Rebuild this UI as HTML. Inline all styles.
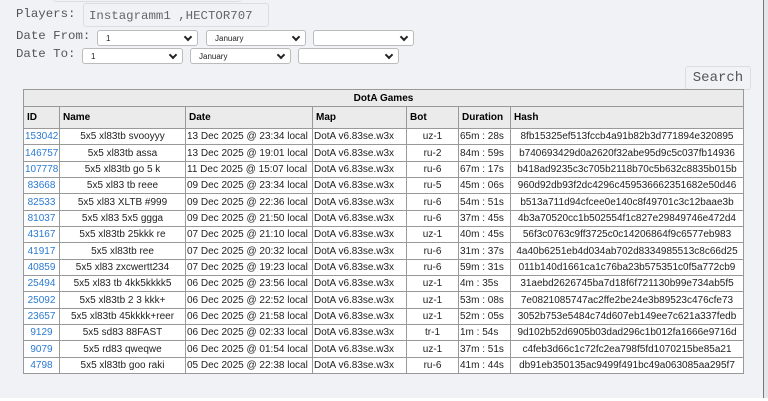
<!DOCTYPE html>
<html><head><meta charset="utf-8"><style>
body{margin:0;width:768px;height:401px;background:#f1f2f6;position:relative;overflow:hidden;font-family:"Liberation Sans",Arial,sans-serif;}
.mono{font-family:"Liberation Mono","DejaVu Sans Mono",monospace;color:#555;}
.lbl{position:absolute;font-size:12.4px;}
.box{position:absolute;background:#f1f2f6;border:1px solid #ddd;border-radius:3px;}
.sel{position:absolute;height:16px;background:#fff;border:1px solid #bbb;border-radius:3px;font-size:8px;line-height:15px;padding-left:8px;box-sizing:border-box;color:#222;}
.sel::after{content:"";position:absolute;right:6px;top:3px;width:4px;height:4px;border-right:2px solid #222;border-bottom:2px solid #222;transform:rotate(45deg);}
table{position:absolute;left:23px;top:89px;width:721px;table-layout:fixed;border-collapse:collapse;background:#fff;font-size:10px;}
td,th{border:1px solid #999;padding:0 1px;white-space:nowrap;overflow:hidden;}
tr{height:16.35px;}
tr.h{height:22px;}
tr.t{height:17px;}
th{background:#ebebeb;font-weight:bold;text-align:left;padding:0 3px;}
th.t{text-align:center;}
td{text-align:center;color:#222;}
td.l{text-align:left;}
td a{color:#2a7ad3;}
</style></head><body>
<div class="box" style="left:53px;top:-8px;width:186px;height:8px"></div>
<div class="lbl mono" style="left:16px;top:7px">Players:</div>
<div class="box mono" style="left:83px;top:3px;width:186px;height:24px;font-size:12.4px;line-height:24px;padding-left:5px;box-sizing:border-box;color:#666">Instagramm1 ,HECTOR707</div>
<div class="lbl mono" style="left:16px;top:29px">Date From:</div>
<div class="sel" style="left:97px;top:30px;width:101px">1</div>
<div class="sel" style="left:206px;top:30px;width:100px">January</div>
<div class="sel" style="left:313px;top:30px;width:101px;"></div>
<div class="lbl mono" style="left:16px;top:47px">Date To:</div>
<div class="sel" style="left:82px;top:48px;width:101px">1</div>
<div class="sel" style="left:190px;top:48px;width:101px">January</div>
<div class="sel" style="left:298px;top:48px;width:101px"></div>
<div class="box mono" style="left:685px;top:66px;width:64px;height:22px;font-size:14px;line-height:22px;text-align:center;color:#555;border-color:#ddd">Search</div>
<div style="position:absolute;left:763px;top:0;width:1px;height:401px;background:#777"></div>
<div style="position:absolute;left:764px;top:0;width:4px;height:401px;background:#e4e5e9"></div>
<div style="position:absolute;left:0;top:398px;width:768px;height:3px;background:#fff"></div>
<table>
<colgroup><col style="width:36px"><col style="width:126px"><col style="width:127px"><col style="width:94px"><col style="width:52px"><col style="width:52px"><col></colgroup>
<tr class="t"><th class="t" colspan="7">DotA Games</th></tr>
<tr class="h"><th>ID</th><th>Name</th><th>Date</th><th>Map</th><th>Bot</th><th>Duration</th><th>Hash</th></tr>
<tr><td><a>153042</a></td><td>5x5 xl83tb svooyyy</td><td class="l">13 Dec 2025 @ 23:34 local</td><td class="l">DotA v6.83se.w3x</td><td>uz-1</td><td class="l">65m : 28s</td><td>8fb15325ef513fccb4a91b82b3d771894e320895</td></tr>
<tr><td><a>146757</a></td><td>5x5 xl83tb assa</td><td class="l">13 Dec 2025 @ 19:01 local</td><td class="l">DotA v6.83se.w3x</td><td>ru-2</td><td class="l">84m : 59s</td><td>b740693429d0a2620f32abe95d9c5c037fb14936</td></tr>
<tr><td><a>107778</a></td><td>5x5 xl83tb go 5 k</td><td class="l">11 Dec 2025 @ 15:07 local</td><td class="l">DotA v6.83se.w3x</td><td>ru-6</td><td class="l">67m : 17s</td><td>b418ad9235c3c705b2118b70c5b632c8835b015b</td></tr>
<tr><td><a>83668</a></td><td>5x5 xl83 tb reee</td><td class="l">09 Dec 2025 @ 23:34 local</td><td class="l">DotA v6.83se.w3x</td><td>ru-5</td><td class="l">45m : 06s</td><td>960d92db93f2dc4296c459536662351682e50d46</td></tr>
<tr><td><a>82533</a></td><td>5x5 xl83 XLTB #999</td><td class="l">09 Dec 2025 @ 22:36 local</td><td class="l">DotA v6.83se.w3x</td><td>ru-6</td><td class="l">54m : 51s</td><td>b513a711d94cfcee0e140c8f49701c3c12baae3b</td></tr>
<tr><td><a>81037</a></td><td>5x5 xl83 5x5 ggga</td><td class="l">09 Dec 2025 @ 21:50 local</td><td class="l">DotA v6.83se.w3x</td><td>ru-6</td><td class="l">37m : 45s</td><td>4b3a70520cc1b502554f1c827e29849746e472d4</td></tr>
<tr><td><a>43167</a></td><td>5x5 xl83tb 25kkk re</td><td class="l">07 Dec 2025 @ 21:10 local</td><td class="l">DotA v6.83se.w3x</td><td>uz-1</td><td class="l">40m : 45s</td><td>56f3c0763c9ff3725c0c14206864f9c6577eb983</td></tr>
<tr><td><a>41917</a></td><td>5x5 xl83tb ree</td><td class="l">07 Dec 2025 @ 20:32 local</td><td class="l">DotA v6.83se.w3x</td><td>ru-6</td><td class="l">31m : 37s</td><td>4a40b6251eb4d034ab702d8334985513c8c66d25</td></tr>
<tr><td><a>40859</a></td><td>5x5 xl83 zxcwertt234</td><td class="l">07 Dec 2025 @ 19:23 local</td><td class="l">DotA v6.83se.w3x</td><td>ru-6</td><td class="l">59m : 31s</td><td>011b140d1661ca1c76ba23b575351c0f5a772cb9</td></tr>
<tr><td><a>25494</a></td><td>5x5 xl83 tb 4kk5kkkk5</td><td class="l">06 Dec 2025 @ 23:56 local</td><td class="l">DotA v6.83se.w3x</td><td>uz-1</td><td class="l">4m : 35s</td><td>31aebd2626745ba7d18f6f721130b99e734ab5f5</td></tr>
<tr><td><a>25092</a></td><td>5x5 xl83tb 2 3 kkk+</td><td class="l">06 Dec 2025 @ 22:52 local</td><td class="l">DotA v6.83se.w3x</td><td>uz-1</td><td class="l">53m : 08s</td><td>7e0821085747ac2ffe2be24e3b89523c476cfe73</td></tr>
<tr><td><a>23657</a></td><td>5x5 xl83tb 45kkkk+reer</td><td class="l">06 Dec 2025 @ 21:58 local</td><td class="l">DotA v6.83se.w3x</td><td>uz-1</td><td class="l">52m : 05s</td><td>3052b753e5484c74d607eb149ee7c621a337fedb</td></tr>
<tr><td><a>9129</a></td><td>5x5 sd83 88FAST</td><td class="l">06 Dec 2025 @ 02:33 local</td><td class="l">DotA v6.83se.w3x</td><td>tr-1</td><td class="l">1m : 54s</td><td>9d102b52d6905b03dad296c1b012fa1666e9716d</td></tr>
<tr><td><a>9079</a></td><td>5x5 rd83 qweqwe</td><td class="l">06 Dec 2025 @ 01:54 local</td><td class="l">DotA v6.83se.w3x</td><td>uz-1</td><td class="l">37m : 51s</td><td>c4feb3d66c1c72fc2ea798f5fd1070215be85a21</td></tr>
<tr><td><a>4798</a></td><td>5x5 xl83tb goo raki</td><td class="l">05 Dec 2025 @ 22:38 local</td><td class="l">DotA v6.83se.w3x</td><td>ru-6</td><td class="l">41m : 44s</td><td>db91eb350135ac9499f491bc49a063085aa295f7</td></tr>
</table>
</body></html>
